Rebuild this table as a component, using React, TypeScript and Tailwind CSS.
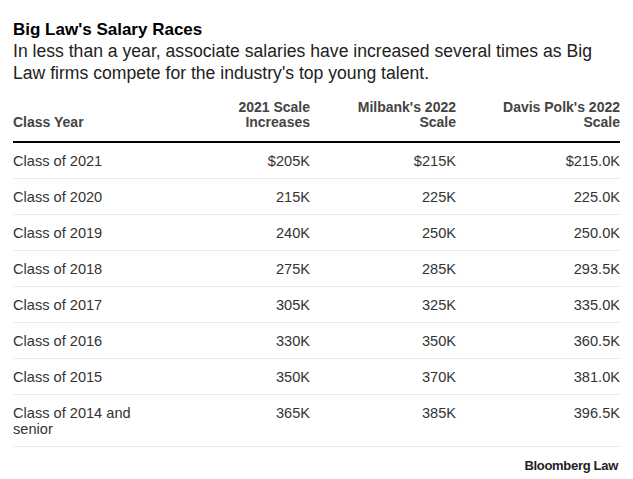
const rows = [
  ["Class of 2021", "$205K", "$215K", "$215.0K"],
  ["Class of 2020", "215K", "225K", "225.0K"],
  ["Class of 2019", "240K", "250K", "250.0K"],
  ["Class of 2018", "275K", "285K", "293.5K"],
  ["Class of 2017", "305K", "325K", "335.0K"],
  ["Class of 2016", "330K", "350K", "360.5K"],
  ["Class of 2015", "350K", "370K", "381.0K"],
  ["Class of 2014 and senior", "365K", "385K", "396.5K"],
];

export default function App() {
  return (
    <div className="w-[633px] h-[479px] bg-white px-[13px] pt-[19px] font-['Liberation_Sans',Arial,sans-serif]">
      <h1 className="text-[17px] leading-[21px] font-bold text-black">Big Law's Salary Races</h1>
      <p className="text-[17.6px] leading-[22px] text-[#222]">
        In less than a year, associate salaries have increased several times as Big Law firms compete for
        the industry's top young talent.
      </p>

      <div className="mt-[16px] w-[607px]">
        {/* Header */}
        <div className="grid grid-cols-[180px_117px_146px_164px] items-end text-[14px] leading-[15px] font-bold text-[#444] pb-[11px] border-b-2 border-black">
          <div>Class Year</div>
          <div className="text-right">
            2021 Scale
            <br />
            Increases
          </div>
          <div className="text-right">
            Milbank's 2022
            <br />
            Scale
          </div>
          <div className="text-right">
            Davis Polk's 2022
            <br />
            Scale
          </div>
        </div>

        {/* Rows */}
        {rows.map((r) => (
          <div
            key={r[0]}
            className="grid grid-cols-[180px_117px_146px_164px] items-start text-[14.6px] leading-[16px] text-[#333] pt-[10px] pb-[9px] border-b border-[#ebebeb]"
          >
            <div className="pr-4">
              {r[0] === "Class of 2014 and senior" ? (
                <>
                  Class of 2014 and
                  <br />
                  senior
                </>
              ) : (
                r[0]
              )}
            </div>
            <div className="text-right">{r[1]}</div>
            <div className="text-right">{r[2]}</div>
            <div className="text-right">{r[3]}</div>
          </div>
        ))}

        <div className="flex justify-end pt-[11px] pr-[2px]">
          <span className="text-[13px] leading-[16px] font-bold tracking-[-0.3px] text-[#222]">Bloomberg Law</span>
        </div>
      </div>
    </div>
  );
}
